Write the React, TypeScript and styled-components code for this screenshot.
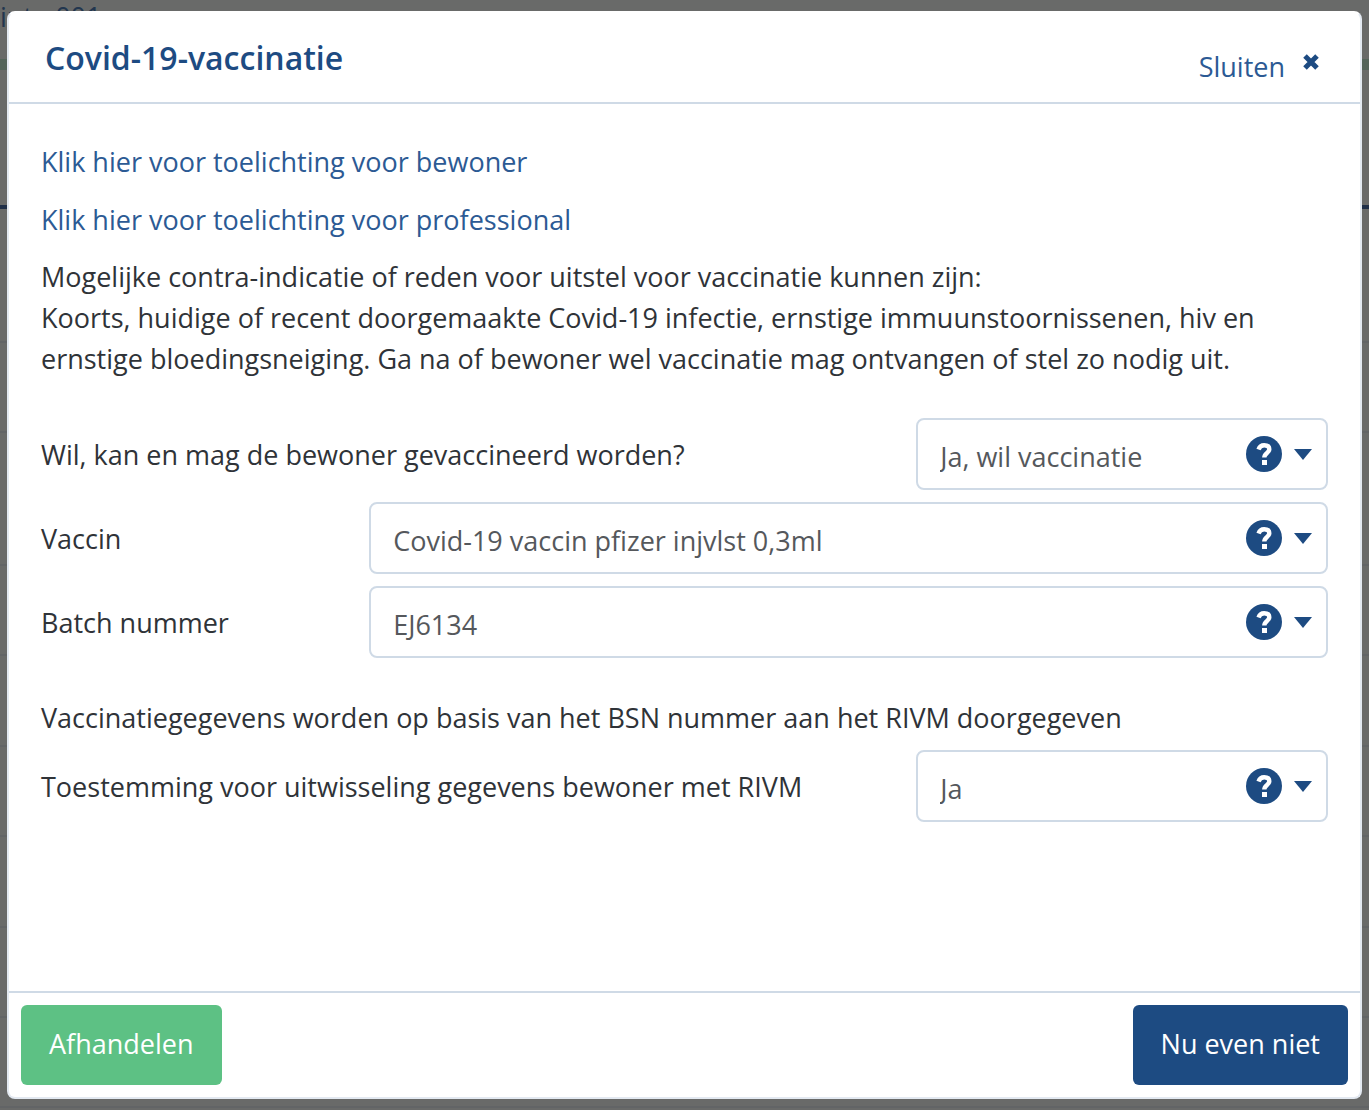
import React, { useState } from 'react';
import styled, { createGlobalStyle } from 'styled-components';

const Global = createGlobalStyle`
  *, *::before, *::after { box-sizing: border-box; }
  body {
    margin: 0;
    background: #696a69;
    color: #2f3338;
    font-family: "Open Sans", "Noto Sans", sans-serif;
    font-size: 27px;
    line-height: 41px;
  }
  p, h2 { margin: 0; }
`;

const Page = styled.div`
  position: relative;
  display: flex;
  flex-direction: column;
  min-height: 100vh;
  overflow: hidden;
`;

const Backdrop = styled.div`
  position: absolute;
  inset: 0;
  display: flex;
  flex-direction: column;
`;

const BackHeader = styled.div`
  height: 59px;
  color: #22364f;
  line-height: 33px;
  white-space: nowrap;
`;

const GreenBar = styled.div`
  height: 11px;
  background: #53645a;
`;

const BackTabs = styled.div`
  height: 139px;
  border-bottom: 4px solid #1f2e48;
`;

const BackRow = styled.div<{ $height: number }>`
  height: ${(p) => p.$height}px;
  flex-shrink: 0;
  border-bottom: 2px solid #626466;
`;

const Dialog = styled.section`
  position: relative;
  flex: 1;
  display: flex;
  flex-direction: column;
  margin: 11px 7px;
  background: #fff;
  border: 2px solid #e3e9f1;
  border-top-color: #fff;
  border-radius: 8px;
`;

const Header = styled.header`
  display: flex;
  justify-content: space-between;
  align-items: center;
  padding: 3px 36px 0;
  height: 91px;
  border-bottom: 2px solid #cfdae6;
`;

const Title = styled.h2`
  color: #1d4b82;
  font-size: 32px;
  font-weight: 600;
  padding-bottom: 4px;
`;

const CloseButton = styled.button`
  display: flex;
  align-items: center;
  gap: 17px;
  padding: 14px 4px 0;
  border: 0;
  background: none;
  color: #2c5a94;
  font: inherit;
  cursor: pointer;
  svg { margin-bottom: 8px; }
`;

const Body = styled.form`
  flex: 1;
  display: flex;
  flex-direction: column;
  padding: 37px 32px 0;
`;

const Links = styled.div`
  display: flex;
  flex-direction: column;
  align-items: flex-start;
  gap: 17px;
  margin-bottom: 16px;
`;

const HelpLink = styled.a`
  color: #2c5a94;
  text-decoration: none;
`;

const Fields = styled.div`
  display: flex;
  flex-direction: column;
  gap: 12px;
  padding: 39px 0;
`;

const Consent = styled.div`
  display: flex;
  flex-direction: column;
  gap: 12px;
`;

const Field = styled.div<{ $wide?: boolean }>`
  display: grid;
  grid-template-columns: ${(p) => (p.$wide ? '25.5% 1fr' : '1fr 32%')};
  align-items: center;
`;

const Control = styled.div`
  position: relative;
  display: grid;
`;

const Select = styled.select`
  appearance: none;
  height: 72px;
  width: 100%;
  padding: 4px 90px 0 22px;
  border: 2px solid #cfdae6;
  border-radius: 8px;
  background: #fff;
  color: #55585c;
  font: inherit;
`;

const Adornment = styled.span`
  position: absolute;
  right: 16px;
  top: 18px;
  display: flex;
  align-items: center;
  gap: 12px;
  pointer-events: none;
`;

const Footer = styled.footer`
  display: flex;
  justify-content: space-between;
  align-items: center;
  padding: 12px;
  border-top: 2px solid #cfdae6;
`;

const Button = styled.button<{ $tone: string }>`
  height: 80px;
  padding: 0 28px 4px;
  border: 0;
  border-radius: 6px;
  background: ${(p) => p.$tone};
  color: #fff;
  font: inherit;
  cursor: pointer;
`;

const CloseIcon = () => (
  <svg width="18" height="18" viewBox="0 0 18 18" aria-hidden="true">
    <path d="M3 3L15 15M15 3L3 15" stroke="#1d4b82" strokeWidth="5" />
  </svg>
);

const HelpIcon = () => (
  <svg width="36" height="36" viewBox="0 0 36 36" aria-hidden="true">
    <circle cx="18" cy="18" r="18" fill="#1d4b82" />
    <path d="M12.5 13.5C13.5 10.5 15.6 9.2 18.2 9.2C21.4 9.2 23.3 10.8 23.3 13.3C23.3 17.2 18.3 16.8 18.3 21.6" fill="none" stroke="#fff" strokeWidth="4.4" />
    <rect x="16" y="24" width="5" height="5" fill="#fff" />
  </svg>
);

const CaretIcon = () => (
  <svg width="18" height="11" viewBox="0 0 18 11" aria-hidden="true">
    <path d="M0 0H18L9 11Z" fill="#1d4b82" />
  </svg>
);

type FieldProps = { id: string; label: string; options: string[]; wide?: boolean };

function SelectField({ id, label, options, wide }: FieldProps) {
  const [value, setValue] = useState(options[0]);
  return (
    <Field $wide={wide}>
      <label htmlFor={id}>{label}</label>
      <Control>
        <Select id={id} value={value} onChange={(e) => setValue(e.target.value)}>
          {options.map((o) => (
            <option key={o}>{o}</option>
          ))}
        </Select>
        <Adornment>
          <HelpIcon />
          <CaretIcon />
        </Adornment>
      </Control>
    </Field>
  );
}

const rowHeights = [134, 90, 133, 90, 91, 90, 91, 90, 90];

export default function App() {
  return (
    <>
      <Global />
      <Page>
        <Backdrop aria-hidden="true">
          <BackHeader>inte 001</BackHeader>
          <GreenBar />
          <BackTabs />
          {rowHeights.map((h, i) => (
            <BackRow key={i} $height={h} />
          ))}
        </Backdrop>
        <Dialog role="dialog" aria-labelledby="dialog-title">
          <Header>
            <Title id="dialog-title">Covid-19-vaccinatie</Title>
            <CloseButton type="button">
              Sluiten
              <CloseIcon />
            </CloseButton>
          </Header>
          <Body id="vaccination" onSubmit={(e) => e.preventDefault()}>
            <Links>
              <HelpLink href="#bewoner">Klik hier voor toelichting voor bewoner</HelpLink>
              <HelpLink href="#professional">Klik hier voor toelichting voor professional</HelpLink>
            </Links>
            <p>Mogelijke contra-indicatie of reden voor uitstel voor vaccinatie kunnen zijn:</p>
            <p>
              Koorts, huidige of recent doorgemaakte Covid-19 infectie, ernstige immuunstoornissenen, hiv en
              ernstige bloedingsneiging. Ga na of bewoner wel vaccinatie mag ontvangen of stel zo nodig uit.
            </p>
            <Fields>
              <SelectField id="wil" label="Wil, kan en mag de bewoner gevaccineerd worden?" options={['Ja, wil vaccinatie']} />
              <SelectField id="vaccin" label="Vaccin" options={['Covid-19 vaccin pfizer injvlst 0,3ml']} wide />
              <SelectField id="batch" label="Batch nummer" options={['EJ6134']} wide />
            </Fields>
            <Consent>
              <p>Vaccinatiegegevens worden op basis van het BSN nummer aan het RIVM doorgegeven</p>
              <SelectField id="rivm" label="Toestemming voor uitwisseling gegevens bewoner met RIVM" options={['Ja', 'Nee']} />
            </Consent>
          </Body>
          <Footer>
            <Button form="vaccination" type="submit" $tone="#5dc184">Afhandelen</Button>
            <Button type="button" $tone="#1d4b82">Nu even niet</Button>
          </Footer>
        </Dialog>
      </Page>
    </>
  );
}
